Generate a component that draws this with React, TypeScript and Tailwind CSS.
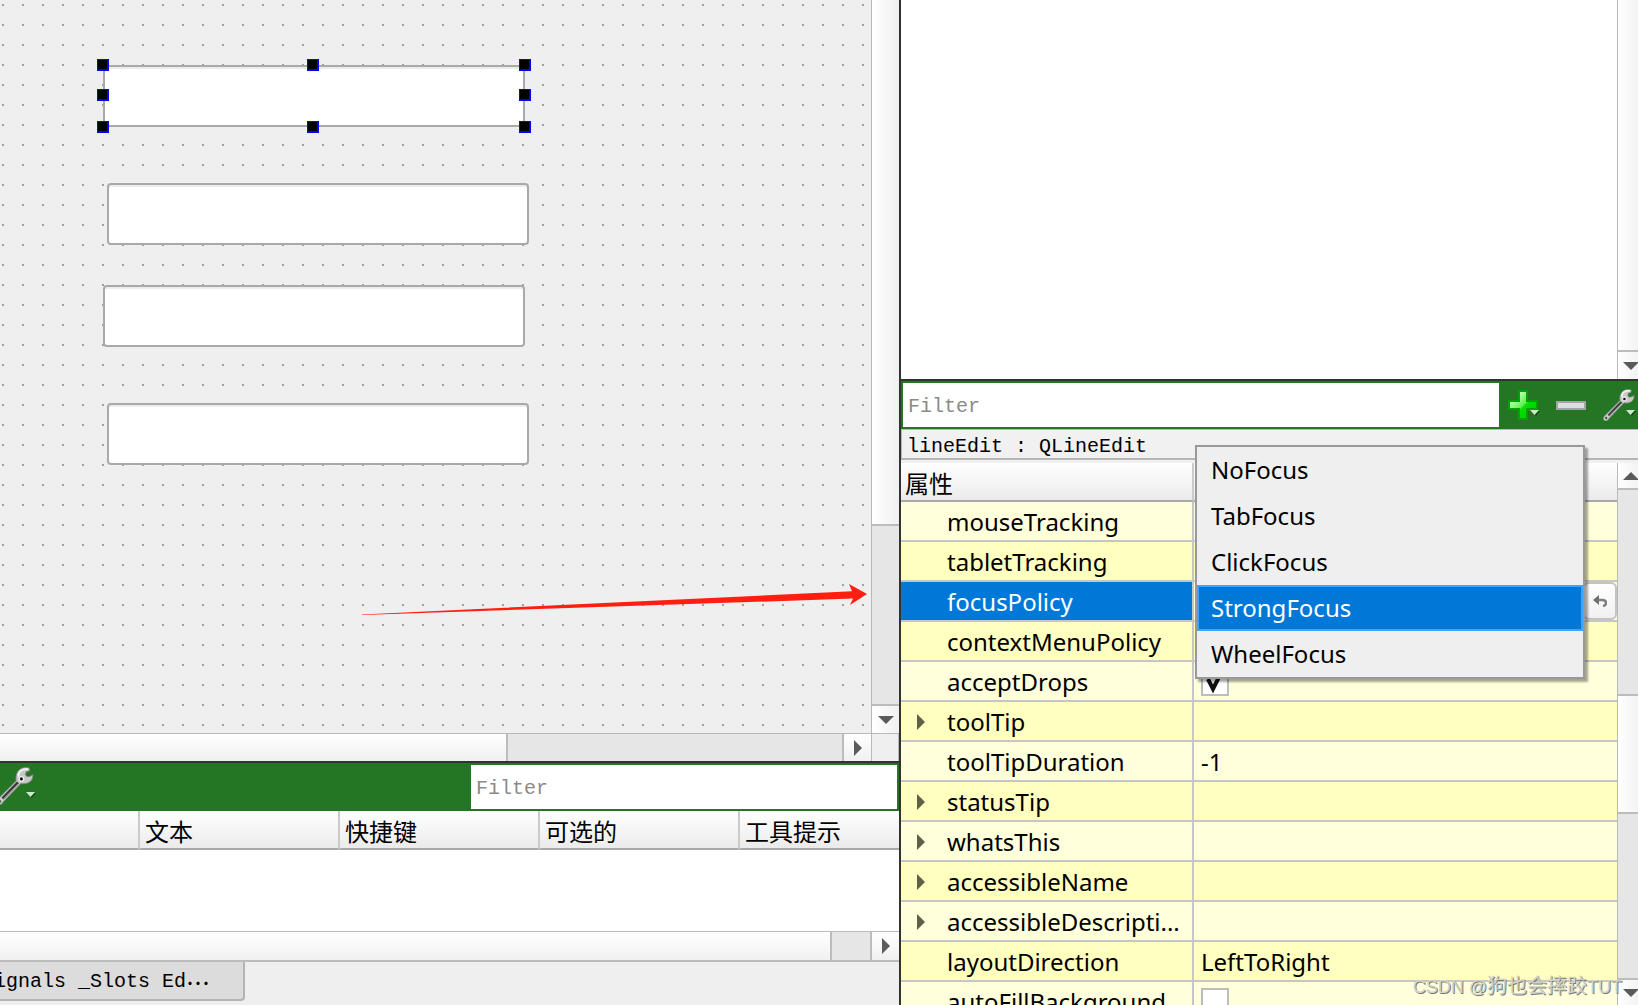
import React from "react";
import clsx from "clsx";

type Property = {
  name: string;
  label?: string;
  value?: string;
  checked?: boolean;
  expandable?: boolean;
  selected?: boolean;
};

const properties: Property[] = [
  { name: "mouseTracking" },
  { name: "tabletTracking" },
  { name: "focusPolicy", selected: true },
  { name: "contextMenuPolicy" },
  { name: "acceptDrops", checked: true },
  { name: "toolTip", expandable: true },
  { name: "toolTipDuration", value: "-1" },
  { name: "statusTip", expandable: true },
  { name: "whatsThis", expandable: true },
  { name: "accessibleName", expandable: true },
  { name: "accessibleDescription", label: "accessibleDescripti...", expandable: true },
  { name: "layoutDirection", value: "LeftToRight" },
  { name: "autoFillBackground", checked: false },
];

const focusPolicies = ["NoFocus", "TabFocus", "ClickFocus", "StrongFocus", "WheelFocus"];

const lineEdits = [
  { id: "lineEdit", place: "left-[103px] top-[65px]" },
  { id: "lineEdit_2", place: "left-[107px] top-[183px] rounded" },
  { id: "lineEdit_3", place: "left-[103px] top-[285px] rounded" },
  { id: "lineEdit_4", place: "left-[107px] top-[403px] rounded" },
];

const handles = [
  "left-[97px] top-[59px]",
  "left-[307px] top-[59px]",
  "left-[519px] top-[59px]",
  "left-[97px] top-[89px]",
  "left-[519px] top-[89px]",
  "left-[97px] top-[121px]",
  "left-[307px] top-[121px]",
  "left-[519px] top-[121px]",
];

function Arrow({ dir, className }: { dir: "up" | "down" | "right"; className?: string }) {
  if (dir === "right") {
    return (
      <svg viewBox="0 0 8 16" className={clsx("h-4 w-2 shrink-0", className)} fill="currentColor">
        <path d="M0 0L8 8L0 16Z" />
      </svg>
    );
  }
  return (
    <svg viewBox="0 0 16 8" className={clsx("h-2 w-4 shrink-0", className)} fill="currentColor">
      <path d={dir === "up" ? "M0 8L8 0L16 8Z" : "M0 0L16 0L8 8Z"} />
    </svg>
  );
}

function Caret({ className }: { className?: string }) {
  return (
    <svg viewBox="0 0 10 6" className={clsx("absolute h-[6px] w-[10px]", className)}>
      <path d="M1 1H10L6 6Z" fill="#155015" />
      <path d="M0 0H9L4.5 5Z" fill="#cfe6cf" />
    </svg>
  );
}

function Wrench({ className }: { className?: string }) {
  return (
    <svg viewBox="0 0 32 32" className={clsx("shrink-0", className)}>
      <path
        d="M1.5 27L17 11.5C16.2 7 18 2.8 21.5 1.2C23.8 .2 26.6 .2 28.2 1L28 3.4L25.4 4L24.8 6.6L26.2 8.2L28.8 7.8L31 6.6C31.2 9.6 29.8 12.4 26.8 13.4C24.8 14.2 22.6 14.2 21 13.8L6 29.5C5 32 2 32.5 .8 31C-.2 29.8 .4 28.2 1.5 27Z"
        fill="#c9c9c9"
        stroke="#7d8a7d"
        strokeWidth=".8"
      />
      <path d="M5.5 26.5L18.5 13" stroke="#3a3a3a" strokeWidth="2.4" />
      <path d="M6.5 26.5L18.8 14" stroke="#8f8f8f" strokeWidth=".8" />
      <path d="M18.8 8C18.8 5 20.3 2.8 23 2L27 1.8" stroke="#f4f4f4" strokeWidth="1.6" fill="none" />
      <circle cx="21.4" cy="10" r="2.4" fill="#efefef" />
      <circle cx="21.4" cy="10" r="1.3" fill="#111" />
      <circle cx="3.2" cy="29" r="1.2" fill="#3d6b3d" />
    </svg>
  );
}

function FormCanvas() {
  return (
    <div className="relative min-w-0 flex-1 overflow-hidden bg-[#efefef] bg-[conic-gradient(at_2px_2px,transparent_75%,#a0a0a0_0)] bg-[length:20px_20px] bg-[position:2px_4px]">
      {lineEdits.map((edit) => (
        <input
          key={edit.id}
          type="text"
          aria-label={edit.id}
          className={clsx(
            "absolute h-[62px] w-[422px] border-2 border-[#a9a9a9] bg-white px-2 text-2xl shadow-[inset_0_2px_0_#ececec] outline-none",
            edit.place
          )}
        />
      ))}
      {handles.map((place) => (
        <span
          key={place}
          className={clsx(
            "absolute h-3 w-3 border-t border-r-2 border-b-2 border-l border-[#0000ff] bg-black",
            place
          )}
        />
      ))}
      <svg viewBox="0 0 505 32" className="absolute top-[584px] left-[362px] h-8 w-[505px]">
        <path d="M0 30.5L490 7.2L487 0L505 10L488 21L491 14.6L0 31Z" fill="#ff1e10" />
      </svg>
    </div>
  );
}

function FormEditor() {
  return (
    <section className="flex min-h-0 flex-1 flex-col">
      <div className="flex min-h-0 flex-1">
        <FormCanvas />
        <div className="flex w-7 shrink-0 flex-col border-l border-[#b9b9b9] text-[#5a5a5a]">
          <div className="flex-[525_1_0%] bg-linear-to-r from-white to-[#f0f0f0]" />
          <div className="flex-[178_1_0%] border-y-2 border-[#bcbcbc] bg-[#e6e6e6]" />
          <button aria-label="向下滚动" className="flex h-[27px] items-center justify-center bg-linear-to-r from-white to-[#f0f0f0]">
            <Arrow dir="down" />
          </button>
        </div>
      </div>
      <div className="flex h-7 border-t border-[#b9b9b9] text-[#5a5a5a]">
        <div className="flex-[507_1_0%] bg-linear-to-b from-white to-[#f0f0f0]" />
        <div className="flex-[334_1_0%] border-x-2 border-[#bcbcbc] bg-[#e6e6e6]" />
        <button aria-label="向右滚动" className="flex w-[27px] items-center justify-center bg-linear-to-b from-white to-[#f0f0f0]">
          <Arrow dir="right" />
        </button>
        <div className="w-7 border-x border-[#b9b9b9] bg-[#efefef]" />
      </div>
    </section>
  );
}

function ActionEditor() {
  return (
    <section className="border-t-2 border-[#323232] bg-white">
      <div className="flex justify-between bg-[#247524] p-[2px] pl-0">
        <button aria-label="配置" className="relative flex w-[34px] items-start justify-end overflow-visible">
          <Wrench className="mt-[2px] h-[38px] w-[38px]" />
          <Caret className="top-[27px] left-[26px]" />
        </button>
        <input
          type="text"
          aria-label="Action filter"
          placeholder="Filter"
          className="h-11 w-[426px] bg-white px-[5px] pt-[3px] font-['Liberation_Mono',monospace] text-xl outline-none placeholder:text-[#8a8a8a]"
        />
      </div>
      <table className="w-full table-fixed border-separate border-spacing-0 text-left text-2xl">
        <colgroup>
          <col className="w-[140px]" />
          <col className="w-[200px]" />
          <col className="w-[200px]" />
          <col className="w-[200px]" />
          <col />
        </colgroup>
        <thead>
          <tr>
            {["", "文本", "快捷键", "可选的", "工具提示"].map((title) => (
              <th
                key={title}
                className="h-[39px] border-r-2 border-b-2 border-r-[#cbcbcb] border-b-[#a9a9a9] bg-linear-to-b from-white to-[#ebebeb] p-0 pt-1 pl-[5px] leading-8 font-normal whitespace-nowrap last:border-r-0"
              >
                {title}
              </th>
            ))}
          </tr>
        </thead>
      </table>
      <div className="h-[81px] bg-white" />
      <div className="flex h-[31px] border-t border-b-2 border-[#bcbcbc] text-[#5a5a5a]">
        <div className="flex-1 bg-linear-to-b from-white to-[#f0f0f0]" />
        <div className="w-[42px] border-x-2 border-[#bcbcbc] bg-[#e6e6e6]" />
        <button aria-label="向右滚动" className="flex w-[27px] items-center justify-center bg-linear-to-b from-white to-[#f0f0f0]">
          <Arrow dir="right" />
        </button>
      </div>
      <div className="flex h-[43px] items-start bg-[#efefef]">
        <button className="flex h-[39px] w-[245px] items-center rounded-br border-r-2 border-b-2 border-[#b4b4b4] bg-[#dcdcdc] pt-[3px] font-['Liberation_Mono',monospace] text-xl whitespace-pre">
          <span className="-ml-[18px]">Signals _Slots Ed</span>
          <span className="font-['Noto_Sans_CJK_TC',sans-serif] text-2xl leading-6">…</span>
        </button>
      </div>
    </section>
  );
}

function ObjectList() {
  return (
    <section className="flex min-h-0 flex-[379_1_0%] bg-white">
      <div className="flex-1" />
      <div className="flex w-[21px] flex-col overflow-hidden border-l border-[#b9b9b9] text-[#5a5a5a]">
        <div className="flex-1 bg-linear-to-r from-white to-[#f3f3f3]" />
        <button aria-label="向下滚动" className="flex h-[29px] items-center border-t-2 border-[#bcbcbc] bg-linear-to-r from-white to-[#f3f3f3] pl-[5px]">
          <Arrow dir="down" />
        </button>
      </div>
    </section>
  );
}

function ValueCell({ property }: { property: Property }) {
  if (property.selected) {
    return (
      <div className="flex justify-end">
        <button
          aria-label="重置"
          className="flex h-[38px] w-[34px] items-center justify-center rounded-md border-2 border-[#c3c3c3] bg-linear-to-b from-white to-[#f0f0f0]"
        >
          <svg viewBox="0 0 14 12" className="h-3 w-[14px]">
            <path d="M0 5L6 0V10Z" fill="#6e6e6e" />
            <path d="M5 5H9.5C12 5 13 6.5 13 8C13 9.6 12 10.8 10 11" fill="none" stroke="#7e7e7e" strokeWidth="2.4" />
          </svg>
        </button>
      </div>
    );
  }
  if (property.checked !== undefined) {
    return (
      <span className="grid w-7">
        <input
          type="checkbox"
          aria-label={property.name}
          defaultChecked={property.checked}
          className="peer col-start-1 row-start-1 h-7 w-7 appearance-none border-2 border-[#bdbdbd] bg-white"
        />
        <svg
          viewBox="0 0 28 28"
          className="pointer-events-none invisible col-start-1 row-start-1 h-7 w-7 peer-checked:visible"
        >
          <path d="M7 11L12 21L19 7" fill="none" stroke="#111" strokeWidth="4" />
        </svg>
      </span>
    );
  }
  return <>{property.value}</>;
}

function PropertyRow({ property, odd }: { property: Property; odd: boolean }) {
  return (
    <tr className={odd ? "bg-[#ffffbf]" : "bg-[#ffffdc]"}>
      <th
        scope="row"
        className={clsx(
          "h-10 border-r-2 border-b-2 border-[#c6c6c6] p-0 text-left font-normal",
          property.selected && "bg-[#0078d7] text-white"
        )}
      >
        <div className="flex items-center pt-[2px] pl-4 leading-9">
          <span className="w-[30px] shrink-0 text-[#5f5f4a]">{property.expandable && <Arrow dir="right" />}</span>
          <span className="whitespace-nowrap">{property.label ?? property.name}</span>
        </div>
      </th>
      <td className={clsx("h-10 border-b-2 border-[#c6c6c6] p-0 leading-9", !property.selected && "pt-[2px] pl-[7px]")}>
        <ValueCell property={property} />
      </td>
    </tr>
  );
}

function FocusMenu() {
  return (
    <div
      role="listbox"
      aria-label="focusPolicy"
      className="absolute top-[64px] right-[53px] left-[294px] border-2 border-[#999] bg-[#efefef] shadow-[3px_3px_2px_rgba(0,0,0,0.35)]"
    >
      {focusPolicies.map((policy) => (
        <button
          key={policy}
          role="option"
          aria-selected={policy === "StrongFocus"}
          className={clsx(
            "block h-[46px] w-full border-2 pl-3 text-left",
            policy === "StrongFocus" ? "border-[#3ba5ff] bg-[#0078d7] text-white" : "border-transparent"
          )}
        >
          {policy}
        </button>
      ))}
    </div>
  );
}

function PropertyEditor() {
  return (
    <section className="relative flex min-h-0 flex-[624_1_0%] flex-col border-t-2 border-[#323232] bg-[#f1f1f1] text-2xl">
      <div className="flex border-b border-[#b9b9b9] bg-[#247524]">
        <input
          type="text"
          aria-label="Property filter"
          placeholder="Filter"
          className="my-[2px] ml-[2px] h-11 min-w-0 flex-1 bg-white px-[5px] pt-[3px] font-['Liberation_Mono',monospace] text-xl outline-none placeholder:text-[#8a8a8a]"
        />
        <div className="flex w-[139px] shrink-0 overflow-hidden">
          <button aria-label="添加" className="relative flex w-12 shrink-0 items-center justify-center">
            <svg viewBox="0 0 30 30" className="h-[30px] w-[30px]">
              <defs>
                <linearGradient id="plus" x1="0" y1="0" x2="1" y2="1">
                  <stop offset="0.2" stopColor="#c8ffc0" />
                  <stop offset="0.5" stopColor="#5cf04c" />
                  <stop offset="0.55" stopColor="#00e000" />
                  <stop offset="1" stopColor="#00c800" />
                </linearGradient>
              </defs>
              <path d="M11 1H19V11H29V19H19V29H11V19H1V11H11Z" fill="url(#plus)" stroke="#00a400" strokeWidth="2" />
            </svg>
            <Caret className="top-[29px] left-[31px]" />
          </button>
          <button aria-label="删除" className="flex w-12 shrink-0 items-center justify-center">
            <span className="h-[9px] w-[30px] border-2 border-[#a3a3a3] bg-[#dedede]" />
          </button>
          <button aria-label="配置" className="relative flex w-12 shrink-0 items-center justify-center">
            <Wrench className="h-8 w-8" />
            <Caret className="top-[29px] left-[31px]" />
          </button>
        </div>
      </div>
      <div className="h-[30px] border-b-2 border-l border-[#b5b5b5] pl-[5px] font-['Liberation_Mono',monospace] text-xl leading-[34px]">
        lineEdit : QLineEdit
      </div>
      <div className="mt-[3px] flex min-h-0 flex-1">
        <div className="min-w-0 flex-1 overflow-hidden">
          <table className="w-full table-fixed border-separate border-spacing-0">
            <colgroup>
              <col className="w-[293px]" />
              <col />
            </colgroup>
            <thead>
              <tr>
                <th className="h-[39px] border-r-2 border-b-2 border-r-[#cbcbcb] border-b-[#a9a9a9] bg-linear-to-b from-white to-[#ebebeb] p-0 pt-1 pl-1 text-left leading-8 font-normal">
                  属性
                </th>
                <td className="border-b-2 border-[#a9a9a9] bg-linear-to-b from-white to-[#ebebeb] p-0" />
              </tr>
            </thead>
            <tbody>
              {properties.map((property, i) => (
                <PropertyRow key={property.name} property={property} odd={i % 2 === 1} />
              ))}
            </tbody>
          </table>
        </div>
        <div className="flex w-[21px] flex-col overflow-hidden border-l border-[#b9b9b9] text-[#5a5a5a]">
          <button aria-label="向上滚动" className="flex h-[25px] items-center bg-linear-to-r from-white to-[#f3f3f3] pl-[5px]">
            <Arrow dir="up" />
          </button>
          <div className="flex-[204_1_0%] border-y-2 border-[#bcbcbc] bg-[#e6e6e6]" />
          <div className="flex-[116_1_0%] bg-linear-to-r from-white to-[#f3f3f3]" />
          <div className="flex-[164_1_0%] border-y-2 border-[#bcbcbc] bg-[#e6e6e6]" />
          <button aria-label="向下滚动" className="flex h-[25px] items-center bg-linear-to-r from-white to-[#f3f3f3] pl-[5px]">
            <Arrow dir="down" />
          </button>
        </div>
      </div>
      <FocusMenu />
    </section>
  );
}

export default function App() {
  return (
    <div className="relative grid h-screen grid-cols-[901fr_737fr] overflow-hidden bg-white font-['Noto_Sans','Noto_Sans_CJK_SC',sans-serif] text-black">
      <div className="flex min-h-0 min-w-0 flex-col border-r-2 border-[#323232]">
        <FormEditor />
        <ActionEditor />
      </div>
      <div className="flex min-h-0 min-w-0 flex-col">
        <ObjectList />
        <PropertyEditor />
      </div>
      <p className="pointer-events-none absolute right-4 bottom-1 font-['Liberation_Sans','Noto_Sans_CJK_SC',sans-serif] text-lg leading-7 text-[#d2d2ca] [text-shadow:1px_1px_0_#7c7c72]">
        CSDN @<span className="text-xl">狗也会摔跤</span>TUT
      </p>
    </div>
  );
}
